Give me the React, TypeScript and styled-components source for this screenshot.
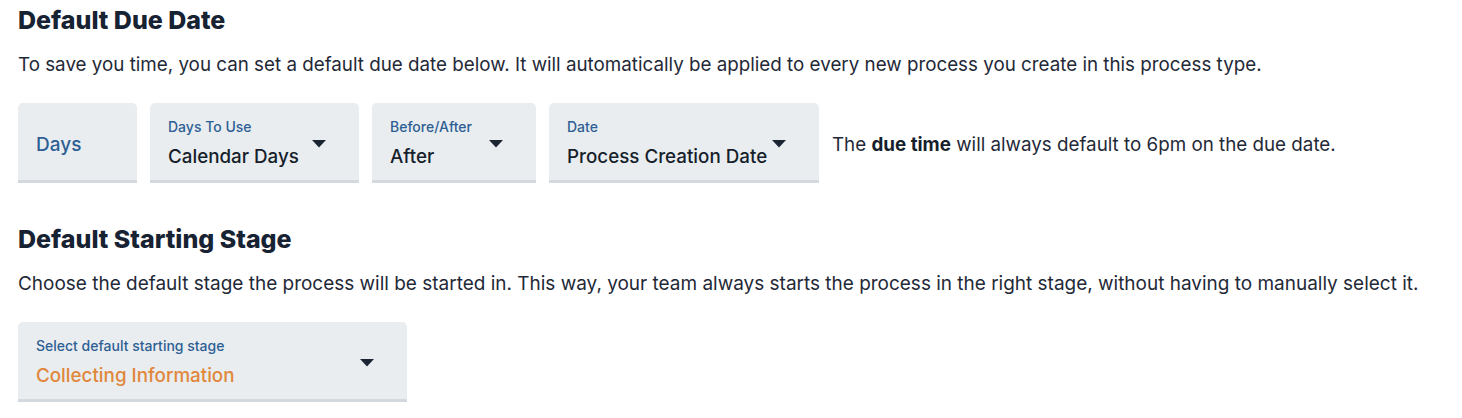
import styled, { createGlobalStyle } from "styled-components";

const GlobalStyle = createGlobalStyle`
  body {
    margin: 0;
    background: #ffffff;
    font-family: "Inter", "Roboto", sans-serif;
    color: #1f2937;
  }
`;

const Caret = () => (
  <svg width="14" height="8" viewBox="0 0 14 8">
    <path d="M0 0 L14 0 L7 7.5 Z" fill="#1b2433" />
  </svg>
);

type SelectProps = {
  label: string;
  value: string;
  width: number;
  accent?: boolean;
};

const SelectField = ({ label, value, width, accent }: SelectProps) => (
  <Field $width={width}>
    <FieldText>
      <FieldLabel>{label}</FieldLabel>
      <FieldValue $accent={accent}>{value}</FieldValue>
    </FieldText>
    <CaretWrap>
      <Caret />
    </CaretWrap>
  </Field>
);

export default function App() {
  return (
    <>
      <GlobalStyle />
      <Page>
        <Section>
          <Heading>Default Due Date</Heading>
          <Description>
            To save you time, you can set a default due date below. It will
            automatically be applied to every new process you create in this
            process type.
          </Description>
          <FieldRow>
            <Field $width={119}>
              <PlainValue>Days</PlainValue>
            </Field>
            <SelectField label="Days To Use" value="Calendar Days" width={209} />
            <SelectField label="Before/After" value="After" width={164} />
            <SelectField label="Date" value="Process Creation Date" width={270} />
            <Note>
              The <strong>due time</strong> will always default to 6pm on the
              due date.
            </Note>
          </FieldRow>
        </Section>
        <Section>
          <Heading>Default Starting Stage</Heading>
          <Description $wide>
            Choose the default stage the process will be started in. This way,
            your team always starts the process in the right stage, without
            having to manually select it.
          </Description>
          <FieldRow>
            <SelectField
              label="Select default starting stage"
              value="Collecting Information"
              width={389}
              accent
            />
          </FieldRow>
        </Section>
      </Page>
    </>
  );
}

const Page = styled.div`
  padding: 4px 18px 0;
  display: flex;
  flex-direction: column;
  gap: 40px;
`;

const Section = styled.section`
  display: flex;
  flex-direction: column;
`;

const Heading = styled.h2`
  margin: 0;
  font-family: "Inter", sans-serif;
  font-weight: 800;
  font-size: 25px;
  line-height: 32px;
  color: #172233;
`;

const Description = styled.p<{ $wide?: boolean }>`
  margin: 16px 0 0;
  font-size: ${(p) => (p.$wide ? "18.98px" : "18.8px")};
  line-height: 26px;
  color: #1f2937;
`;

const FieldRow = styled.div`
  margin-top: 25px;
  display: flex;
  align-items: center;
  gap: 13px;
`;

const Field = styled.div<{ $width: number }>`
  box-sizing: border-box;
  width: ${(p) => p.$width}px;
  height: 80px;
  padding: 15px 33px 0 18px;
  display: flex;
  align-items: flex-start;
  justify-content: space-between;
  background: #e9edf0;
  border-radius: 5px 5px 0 0;
  border-bottom: 3px solid #d3d9de;
`;

const FieldText = styled.div`
  display: flex;
  flex-direction: column;
  gap: 9px;
  white-space: nowrap;
`;

const FieldLabel = styled.span`
  font-size: 14px;
  line-height: 18px;
  font-weight: 500;
  color: #2e5f94;
`;

const FieldValue = styled.span<{ $accent?: boolean }>`
  font-size: 18.8px;
  line-height: 24px;
  font-weight: 500;
  color: ${(p) => (p.$accent ? "#e0873b" : "#161f2b")};
`;

const PlainValue = styled.span`
  margin-top: 15px;
  font-size: 19px;
  line-height: 24px;
  font-weight: 500;
  color: #2e5f94;
`;

const CaretWrap = styled.div`
  display: flex;
  margin-top: 22px;
  flex-shrink: 0;
`;

const Note = styled.p`
  margin: 2px 0 0;
  font-size: 18.8px;
  color: #1f2937;

  strong {
    font-weight: 700;
    color: #161f2b;
  }
`;
